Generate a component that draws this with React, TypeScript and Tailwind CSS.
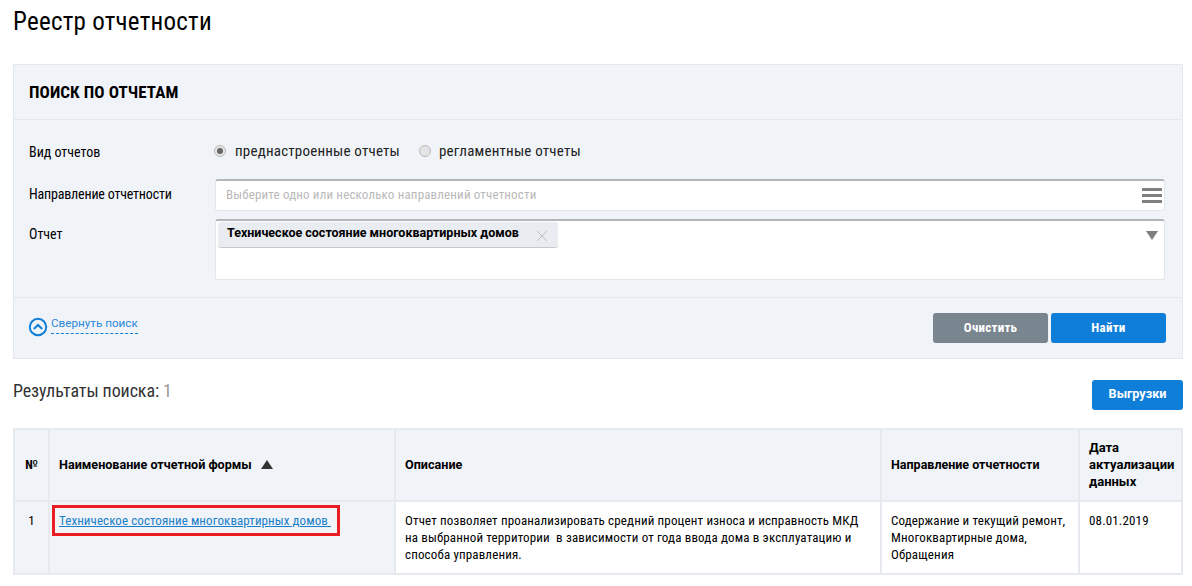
import React from 'react';

export default function App() {
  return (
    <div className="h-[586px] w-[1192px] overflow-hidden bg-white pl-[13px] pr-[9px] font-['Roboto',sans-serif] text-black">
      <h1 className="pt-[6px] text-[25px] leading-[32px] font-normal tracking-[0.25px] [font-stretch:85%]">Реестр отчетности</h1>

      <div className="mt-[26px] border border-[#e4e8ec] bg-[#f0f3f8]">
        <div className="flex h-[55px] items-center border-b border-[#e4e8ec] pl-[15px] pt-[1px] text-[17px] font-bold tracking-[0.1px] [font-stretch:85%]">ПОИСК ПО ОТЧЕТАМ</div>

        <div className="pl-[15px] pr-[17px] pt-[17px]">
          <div className="flex h-[27px] items-center">
            <div className="w-[185px] pt-[3px] text-[14px] [font-stretch:85%]">Вид отчетов</div>
            <label className="flex items-center gap-[9px] pt-[1px] text-[15px] tracking-[0.2px] text-[#222] [font-stretch:85%]">
              <span className="flex h-[12px] w-[12px] items-center justify-center rounded-full border border-[#bbb] bg-[#e4e4e4]">
                <span className="h-[6px] w-[6px] rounded-full bg-[#666]" />
              </span>
              преднастроенные отчеты
            </label>
            <label className="ml-[19px] flex items-center gap-[8px] pt-[1px] text-[15px] tracking-[0.2px] text-[#222] [font-stretch:85%]">
              <span className="h-[12px] w-[12px] rounded-full border border-[#bbb] bg-[#e4e4e4]" />
              регламентные отчеты
            </label>
          </div>

          <div className="mt-[15px] flex h-[32px] items-center">
            <div className="w-[186px] pb-[2px] text-[14px] tracking-[-0.18px] [font-stretch:85%]">Направление отчетности</div>
            <div className="flex h-[32px] flex-1 items-center justify-between rounded-[3px] border border-[#e2e5e9] border-t-2 border-t-[#b4b7ba] bg-white pb-[1px] pl-[10px] pr-[2px] text-[13px] tracking-[0.16px] text-[#b9b9b9] [font-stretch:85%]">
              Выберите одно или несколько направлений отчетности
              <div className="flex w-[20px] flex-col gap-[3px]">
                <span className="h-[3px] bg-[#808080]" />
                <span className="h-[3px] bg-[#808080]" />
                <span className="h-[3px] bg-[#808080]" />
              </div>
            </div>
          </div>

          <div className="mt-[8px] flex">
            <div className="w-[186px] pt-[5px] text-[14px] [font-stretch:85%]">Отчет</div>
            <div className="relative h-[61px] flex-1 rounded-[3px] border border-[#e2e5e9] border-t-2 border-t-[#b4b7ba] bg-white pl-[2px] pt-[1px]">
              <div className="flex h-[26px] w-[340px] items-center justify-between rounded-[3px] border-b border-[#c4c9ce] bg-[#e9ecf1] pb-[3px] pl-[9px] pr-[10px] text-[12.5px] font-bold">
                Техническое состояние многоквартирных домов
                <svg width="12" height="12" viewBox="0 0 12 12" className="mt-[5px]">
                  <path d="M1 1l10 10M11 1L1 11" stroke="#bcbcbc" strokeWidth="1" fill="none" />
                </svg>
              </div>
              <span className="absolute right-[6px] top-[10px] h-0 w-0 border-x-[6px] border-t-[9px] border-x-transparent border-t-[#808080]" />
            </div>
          </div>
        </div>

        <div className="mt-[17px] flex h-[61px] items-start justify-between border-t border-[#e4e8ec] pl-[15px] pr-[16px] pt-[15px]">
          <div className="flex items-start gap-[3px] pt-[3px]">
            <svg width="20" height="20" viewBox="0 0 20 20" className="-ml-[1px] mt-[1px]">
              <circle cx="10" cy="10" r="8.2" stroke="#0f7fd8" strokeWidth="2" fill="none" />
              <path d="M5.8 12l4.2-4 4.2 4" stroke="#0f7fd8" strokeWidth="2" fill="none" />
            </svg>
            <span className="border-b border-dashed border-[#0f7fd8] pb-[2px] text-[11.7px] leading-[15px] text-[#2a88d8]">Свернуть поиск</span>
          </div>
          <div className="flex gap-[3px]">
            <button className="h-[30px] w-[115px] rounded-[3px] bg-[#7a868f] text-[13px] font-bold tracking-[0.25px] text-white [font-stretch:85%]">Очистить</button>
            <button className="h-[30px] w-[115px] rounded-[3px] bg-[#0e7ed8] text-[13px] font-bold tracking-[0.25px] text-white [font-stretch:85%]">Найти</button>
          </div>
        </div>
      </div>

      <div className="mt-[20px] flex h-[31px] items-center justify-between">
        <div className="-mt-[8px] text-[18px] tracking-[-0.1px] text-[#333] [font-stretch:85%]">Результаты поиска: <span className="text-[#9a9a9a]">1</span></div>
        <button className="h-[30px] w-[91px] rounded-[3px] bg-[#0e7ed8] text-[12.6px] font-bold text-white">Выгрузки</button>
      </div>

      <table className="mt-[18px] w-[1170px] table-fixed border-collapse text-[13px] leading-[17px]">
        <colgroup>
          <col className="w-[35px]" />
          <col className="w-[346px]" />
          <col className="w-[486px]" />
          <col className="w-[198px]" />
          <col />
        </colgroup>
        <thead>
          <tr className="h-[72px] bg-[#f0f3f8] font-bold">
            <th className="border-2 border-[#e6eaee] pb-[2px] text-center text-[12.6px] font-bold">№</th>
            <th className="border-2 border-[#e6eaee] pb-[2px] pl-[9px] text-left text-[12.6px] font-bold">
              Наименование отчетной формы
              <span className="ml-[9px] inline-block h-0 w-0 border-x-[6px] border-b-[9px] border-x-transparent border-b-[#333]" />
            </th>
            <th className="border-2 border-[#e6eaee] pb-[2px] pl-[9px] text-left text-[12.6px] font-bold">Описание</th>
            <th className="border-2 border-[#e6eaee] pb-[2px] pl-[9px] text-left text-[12.5px] font-bold">Направление отчетности</th>
            <th className="border-2 border-[#e6eaee] pb-[2px] pl-[9px] text-left font-bold">Дата актуализации данных</th>
          </tr>
        </thead>
        <tbody className="tracking-[0.15px] [font-stretch:85%]">
          <tr className="h-[73px] align-top">
            <td className="border-2 border-[#e6eaee] bg-[#f0f3f8] pt-[10px] text-center">1</td>
            <td className="relative border-2 border-[#e6eaee] bg-[#f0f3f8] pl-[9px] pt-[10px]">
              <a className="whitespace-pre tracking-[0.08px] text-[#1a7fc8] underline">Техническое состояние многоквартирных домов </a>
              <span className="absolute left-[2px] top-[3px] h-[31px] w-[288px] border-[3px] border-[#ec1c24]" />
            </td>
            <td className="border-2 border-[#e6eaee] pl-[9px] pt-[10px] whitespace-pre">Отчет позволяет проанализировать средний процент износа и исправность МКД{'\n'}на выбранной территории  в зависимости от года ввода дома в эксплуатацию и{'\n'}способа управления.</td>
            <td className="border-2 border-[#e6eaee] pl-[9px] pt-[10px] whitespace-pre">Содержание и текущий ремонт,{'\n'}Многоквартирные дома,{'\n'}Обращения</td>
            <td className="border-2 border-[#e6eaee] pl-[9px] pt-[10px]">08.01.2019</td>
          </tr>
        </tbody>
      </table>
    </div>
  );
}
